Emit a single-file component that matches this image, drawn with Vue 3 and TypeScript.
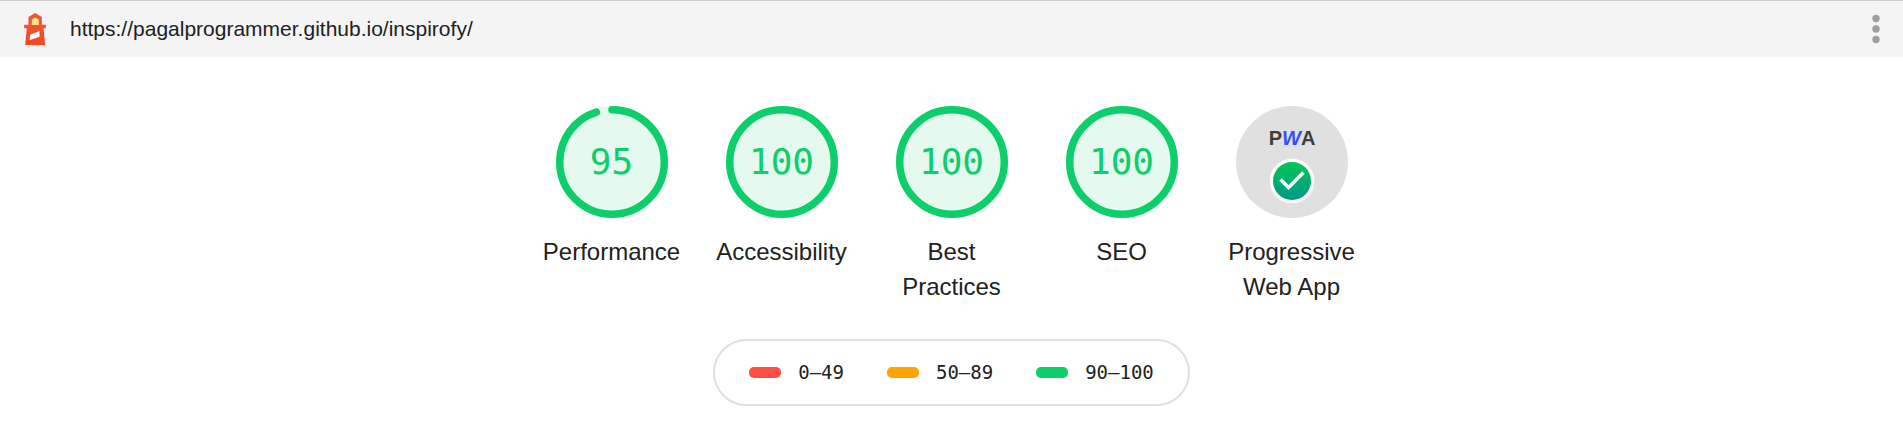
<script setup lang="ts">
interface Score {
  id: string
  label: string
  value: number
}

interface Range {
  text: string
  level: 'fail' | 'average' | 'pass'
}

const pageUrl = 'https://pagalprogrammer.github.io/inspirofy/'

const scores: Score[] = [
  { id: 'performance', label: 'Performance', value: 95 },
  { id: 'accessibility', label: 'Accessibility', value: 100 },
  { id: 'best-practices', label: 'Best Practices', value: 100 },
  { id: 'seo', label: 'SEO', value: 100 },
]

const ranges: Range[] = [
  { text: '0–49', level: 'fail' },
  { text: '50–89', level: 'average' },
  { text: '90–100', level: 'pass' },
]

const circumference = 2 * Math.PI * 56

function arc(value: number): string {
  return `${(value / 100) * circumference} ${circumference}`
}
</script>

<template>
  <div class="report">
    <header class="topbar">
      <svg class="logo" viewBox="42 26 65 96" aria-hidden="true">
        <defs>
          <linearGradient id="tower" x1="0" y1="0" x2="0" y2="1">
            <stop offset="0" stop-color="#eb5a38" />
            <stop offset="0.5" stop-color="#ee5230" />
            <stop offset="1" stop-color="#fa481c" />
          </linearGradient>
        </defs>
        <path d="M75 26 95 38V61H107V72H100L105 122H45L50 72H42V61H55V38Z" fill="url(#tower)" />
        <path d="M65 62V46Q75 35 86 46V62Z" fill="#fbe083" />
        <path d="M60 91 88 80V97L58 108Z" fill="#fff" />
      </svg>
      <a class="url" :href="pageUrl">{{ pageUrl }}</a>
      <button class="menu" type="button" aria-label="Tools menu">
        <svg viewBox="0 0 42 42" aria-hidden="true">
          <circle cx="21" cy="10.500" r="3.700" />
          <circle cx="21" cy="21" r="3.700" />
          <circle cx="21" cy="31.500" r="3.700" />
        </svg>
      </button>
    </header>

    <main>
      <nav class="scores" aria-label="Category scores">
        <a v-for="score in scores" :key="score.id" class="score" :href="'#' + score.id">
          <span class="gauge">
            <svg class="ring" viewBox="0 0 120 120" aria-hidden="true">
              <circle class="base" cx="60" cy="60" r="60" />
              <circle
                class="arc"
                cx="60"
                cy="60"
                r="56"
                transform="rotate(-90 60 60)"
                :stroke-dasharray="arc(score.value)"
              />
            </svg>
            <span class="value">{{ score.value }}</span>
          </span>
          <span class="label">{{ score.label }}</span>
        </a>
        <a class="score" href="#pwa">
          <svg class="gauge" viewBox="0 0 112 112" aria-hidden="true">
            <defs>
              <linearGradient id="badge" x1="0" y1="0" x2="0" y2="1">
                <stop offset="0" stop-color="#00c852" />
                <stop offset="1" stop-color="#009688" />
              </linearGradient>
            </defs>
            <circle cx="56" cy="56" r="56" fill="#e0e0e0" />
            <text class="pwa" x="56" y="39" text-anchor="middle">P<tspan class="pwa-w">W</tspan>A</text>
            <circle cx="56" cy="75" r="22.300" fill="#fff" />
            <circle cx="56" cy="75" r="19" fill="url(#badge)" />
            <path d="M44.500 73.500 52.500 81.500 67.500 66.500" fill="none" stroke="#fff" stroke-width="3.500" />
          </svg>
          <span class="label">Progressive Web App</span>
        </a>
      </nav>

      <ul class="legend" aria-label="Score scale">
        <li v-for="range in ranges" :key="range.level" :class="range.level">{{ range.text }}</li>
      </ul>
    </main>
  </div>
</template>

<style>
body {
  margin: 0;
  background: #fff;
}
</style>

<style scoped>
.report {
  color: #212121;
  font-family: "Liberation Sans", Arial, sans-serif;
}

.topbar {
  display: flex;
  align-items: center;
  box-sizing: border-box;
  height: 57px;
  padding: 0 6px 0 24px;
  border-top: 1px solid #ccc;
  background: #f4f4f4;
}

.logo {
  width: 22px;
  height: 32px;
  margin-right: 24px;
}

.url {
  color: inherit;
  font-size: 21px;
  line-height: 28px;
  text-decoration: none;
}

.menu {
  width: 42px;
  height: 42px;
  margin-left: auto;
  padding: 0;
  border: 0;
  background: none;
  cursor: pointer;
}

.menu svg {
  display: block;
  fill: #9e9e9e;
}

main {
  display: flex;
  flex-direction: column;
  align-items: center;
  padding: 49px 0 28px;
}

.scores {
  display: flex;
  justify-content: center;
}

.score {
  display: flex;
  flex-direction: column;
  align-items: center;
  gap: 16px;
  box-sizing: border-box;
  width: 170px;
  padding: 0 10px;
  color: inherit;
  text-decoration: none;
}

.gauge {
  display: grid;
  place-items: center;
  width: 112px;
  height: 112px;
}

.ring,
.value {
  grid-area: 1 / 1;
}

.ring {
  width: 112px;
  height: 112px;
}

.base {
  fill: #e6f9ee;
}

.arc {
  fill: none;
  stroke: #0cce6b;
  stroke-width: 8;
  stroke-linecap: round;
}

.value {
  color: #0cce6b;
  font-family: "DejaVu Sans Mono", monospace;
  font-size: 36px;
  line-height: 48px;
}

.pwa {
  fill: #3d3d3d;
  font-size: 20px;
  font-weight: 700;
}

.pwa-w {
  fill: #304ffe;
  font-style: italic;
}

.label {
  font-size: 24px;
  line-height: 35px;
  text-align: center;
}

.legend {
  display: flex;
  gap: 43px;
  margin: 35px 0 0;
  padding: 16px 34px;
  border: 2px solid #e0e0e0;
  border-radius: 34px;
  font-family: "DejaVu Sans Mono", monospace;
  font-size: 19px;
  line-height: 31px;
  list-style: none;
}

.legend li {
  display: flex;
  align-items: center;
  gap: 17px;
}

.legend li::before {
  width: 32px;
  height: 11px;
  border-radius: 5px;
  background: currentColor;
  content: "";
}

.legend .fail::before {
  background: #ff4e42;
}

.legend .average::before {
  background: #ffa400;
}

.legend .pass::before {
  background: #0cce6b;
}
</style>
